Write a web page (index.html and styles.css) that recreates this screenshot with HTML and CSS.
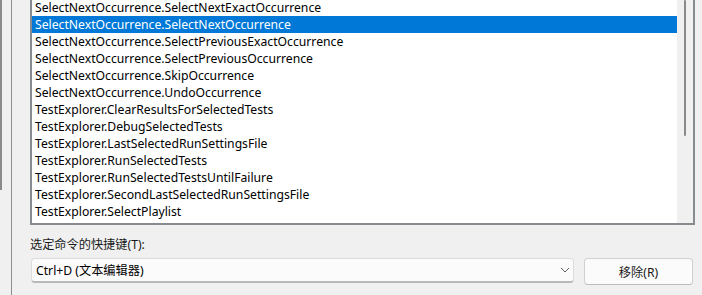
FILE: index.html
```html
<!DOCTYPE html>
<html lang="zh-CN">
<head>
    <meta charset="UTF-8">
    <title>Keyboard Options</title>
    <link rel="stylesheet" href="styles.css">
</head>
<body>
    <div class="page">
        <div class="outer-rail">
            <div class="outer-thumb"></div>
        </div>

        <div class="panel">
            <div class="command-list">
                <ul class="rows">
                    <li>SelectNextOccurrence.SelectNextExactOccurrence</li>
                    <li class="selected">SelectNextOccurrence.SelectNextOccurrence</li>
                    <li>SelectNextOccurrence.SelectPreviousExactOccurrence</li>
                    <li>SelectNextOccurrence.SelectPreviousOccurrence</li>
                    <li>SelectNextOccurrence.SkipOccurrence</li>
                    <li>SelectNextOccurrence.UndoOccurrence</li>
                    <li>TestExplorer.ClearResultsForSelectedTests</li>
                    <li>TestExplorer.DebugSelectedTests</li>
                    <li>TestExplorer.LastSelectedRunSettingsFile</li>
                    <li>TestExplorer.RunSelectedTests</li>
                    <li>TestExplorer.RunSelectedTestsUntilFailure</li>
                    <li>TestExplorer.SecondLastSelectedRunSettingsFile</li>
                    <li>TestExplorer.SelectPlaylist</li>
                </ul>
                <div class="list-scroll">
                    <div class="list-thumb"></div>
                </div>
            </div>

            <label class="field-label" for="shortcut">选定命令的快捷键(T):</label>

            <div class="shortcut-row">
                <div class="combo" id="shortcut">
                    <span>Ctrl+D (文本编辑器)</span>
                    <svg width="10" height="6" viewBox="0 0 10 6">
                        <path d="M1 1 L5 5 L9 1" fill="none" stroke="#606060" stroke-width="1"/>
                    </svg>
                </div>
                <button class="btn">移除(R)</button>
            </div>
        </div>
    </div>
</body>
</html>
```

FILE: styles.css
```css
body {
    margin: 0;
    background-color: #f0f0f0;
    font-family: "Noto Sans", "Noto Sans CJK SC", sans-serif;
    font-size: 12.2px;
    color: #000;
    overflow: hidden;
}

.page {
    display: flex;
    width: 702px;
    height: 295px;
}

.outer-rail {
    width: 11px;
    border-right: 1px solid #8f8f8f;
    flex-shrink: 0;
}

.outer-thumb {
    width: 2px;
    height: 190px;
    background-color: #8a8a8a;
}

.panel {
    margin-left: 18px;
    width: 665px;
}

/* command list box */
.command-list {
    display: flex;
    height: 223px;
    border: 2px solid #878a8f;
    border-top: 0;
    background: #fff;
}

.rows {
    list-style: none;
    margin: -1px 0 0 0;
    padding: 0;
    flex: 1;
}

.rows li {
    height: 17px;
    line-height: 17px;
    padding-left: 3px;
    white-space: nowrap;
}

.rows li.selected {
    background-color: #0078d7;
    color: #fff;
}

.list-scroll {
    width: 16px;
    background-color: #f0f0f0;
    position: relative;
}

.list-thumb {
    position: absolute;
    left: 7px;
    top: 0;
    width: 2px;
    height: 136px;
    border-radius: 1px;
    background-color: #8a8a8a;
}

.field-label {
    display: block;
    margin-top: 12px;
    line-height: 16px;
    color: #1a1a1a;
}

.shortcut-row {
    display: flex;
    gap: 10px;
    margin-top: 5px;
}

.combo {
    width: 543px;
    height: 25px;
    box-sizing: border-box;
    margin-left: 1px;
    padding: 0 3px 0 4px;
    display: flex;
    align-items: center;
    justify-content: space-between;
    background: #fbfbfb;
    border: 1px solid #dcdcdc;
    border-bottom: 2px solid #b8b8b8;
    border-radius: 4px;
}

.btn {
    width: 109px;
    height: 27px;
    padding: 0;
    font-family: inherit;
    font-size: 12.2px;
    color: #1a1a1a;
    background: #fbfbfb;
    border: 1px solid #d0d0d0;
    border-bottom-color: #bcbcbc;
    border-radius: 4px;
}
```
